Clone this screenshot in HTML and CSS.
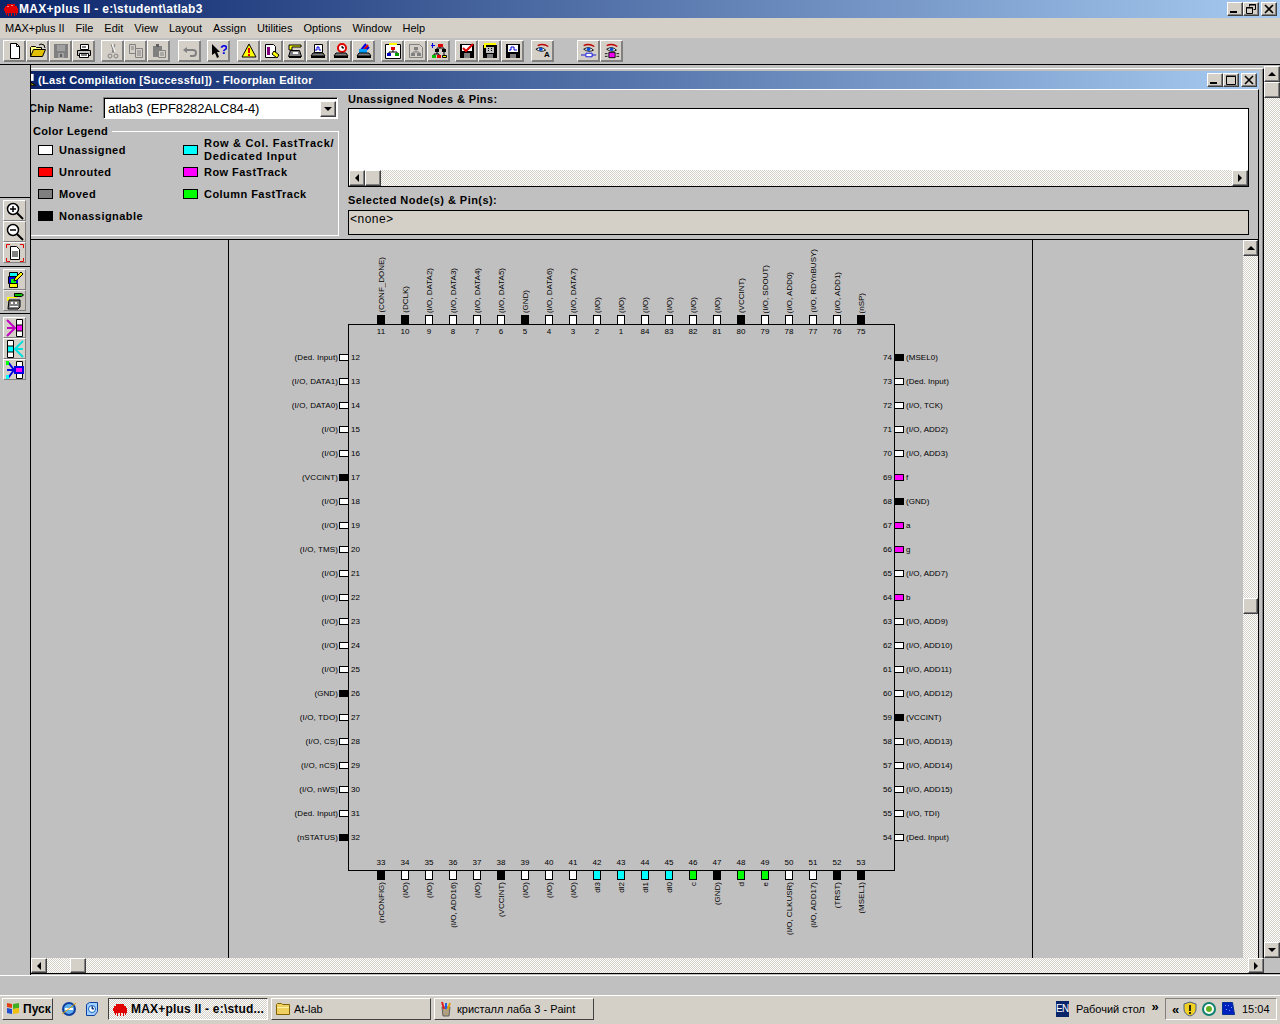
FILE: index.html
```html
<!DOCTYPE html>
<html lang="en">
<head>
<meta charset="utf-8">
<title>MAX+plus II</title>
<link rel="stylesheet" href="styles.css">
</head>
<body>
<div class="screen">
  <header class="titlebar">
    <svg class="ic16 app-logo" viewBox="0 0 16 16"><path fill="#e00000" d="M2 5h2V3h8v2h2v2h1v5h-1v2h-1v-2h-1v3h-1v-3H9v3H8v-3H6v3H5v-3H4v2H3v-2H2v-2H1V7h1z"/><path fill="#ff8080" d="M4 5h2v1H4zM8 4h2v1H8z"/></svg>
    <span class="title-text">MAX+plus II - e:\student\atlab3</span>
    <div class="win-btns main-btns">
      <button class="wb"><i class="g-min"></i></button><button class="wb"><svg viewBox="0 0 10 10"><path fill="none" stroke="#000" d="M3.5 2.5v-2h6v5h-2M.5 3.5h6v6h-6z"/><path stroke="#000" d="M3 1h7M0 4h7"/></svg></button><button class="wb wb-close"><svg viewBox="0 0 10 10"><path stroke="#000" stroke-width="1.6" d="M1 1l8 8M9 1l-8 8"/></svg></button>
    </div>
  </header>
  <nav class="menubar">
    <span>MAX+plus II</span><span>File</span><span>Edit</span><span>View</span><span>Layout</span><span>Assign</span><span>Utilities</span><span>Options</span><span>Window</span><span>Help</span>
  </nav>
  <div class="toolbar">
    <div class="tb-group g-file">
      <button class="tb"><svg class="ic16" viewBox="0 0 16 16"><path fill="#fff" stroke="#000" d="M3.5.5h6l3 3v12h-9z"/><path fill="none" stroke="#000" d="M9.5.5v3h3"/></svg></button>
      <button class="tb"><svg class="ic16" viewBox="0 0 16 16"><path fill="#ffff80" stroke="#000" d="M.5 13.5v-9l1-1h4l1 1h5v2"/><path fill="#e0c000" stroke="#000" d="M.5 13.5l3-7h12l-3 7z"/><path fill="none" stroke="#000" d="M9 2l2-1 3 1 1 3"/></svg></button>
      <button class="tb"><svg class="ic16" viewBox="0 0 16 16"><path fill="#808080" d="M1 1h14v14H1z"/><path fill="#a0a0a0" d="M4 2h8v6H4zM5 10h6v5H5z"/><path fill="#606060" d="M7 11h2v3H7z"/></svg></button>
      <button class="tb"><svg class="ic16" viewBox="0 0 16 16"><path fill="#fff" stroke="#000" d="M4.5 1.5h8v5h-8z"/><path fill="#c0c0c0" stroke="#000" d="M1.5 7.5h13v5h-13z"/><path fill="#fff" stroke="#000" d="M3.5 10.5h9v4h-9z"/><path stroke="#000" d="M6 4h4M5 12h6"/></svg></button>
    </div>
    <div class="tb-group g-edit">
      <button class="tb"><svg class="ic16" viewBox="0 0 16 16"><path fill="none" stroke="#808080" d="M6 1l3 9M10 1L7 10"/><circle cx="5" cy="13" r="2" fill="none" stroke="#808080"/><circle cx="11" cy="13" r="2" fill="none" stroke="#808080"/><path fill="none" stroke="#fff" d="M7 1l3 8"/></svg></button>
      <button class="tb"><svg class="ic16" viewBox="0 0 16 16"><path fill="#d4d0c8" stroke="#808080" d="M1.5 1.5h6v9h-6z"/><path fill="#d4d0c8" stroke="#808080" d="M7.5 5.5h7v9h-7z"/><path stroke="#808080" d="M9 8h4M9 10h4M9 12h4M3 4h3M3 6h3"/></svg></button>
      <button class="tb"><svg class="ic16" viewBox="0 0 16 16"><path fill="#808080" d="M2 3h9v11H2z"/><path fill="#606060" d="M5 1h3v3H5z"/><path fill="#d4d0c8" stroke="#808080" d="M7.5 7.5h7v7h-7z"/><path stroke="#808080" d="M9 10h4M9 12h4"/></svg></button>
    </div>
    <div class="tb-group g-undo">
      <button class="tb"><svg class="ic16" viewBox="0 0 16 16"><path fill="none" stroke="#808080" stroke-width="2" d="M4 7h7q3 0 3 3t-3 3H8"/><path fill="#808080" d="M1 7l4-3v6z"/></svg></button>
    </div>
    <div class="tb-group g-help">
      <button class="tb"><svg class="ic16" viewBox="0 0 16 16"><path fill="#000" d="M1 1l8 8H6l2 5-2 1-2-5-3 2z"/><text x="9" y="11" class="q-mark">?</text></svg></button>
    </div>
    <div class="tb-group g-comp">
      <button class="tb"><svg class="ic16" viewBox="0 0 16 16"><path fill="#ffff00" stroke="#000" d="M8 1l7 13H1z"/><path stroke="#e00000" stroke-width="2" d="M8 5v5M8 11v2"/></svg></button>
      <button class="tb"><svg class="ic16" viewBox="0 0 16 16"><path fill="#fff" stroke="#000" d="M1.5 1.5h8l2 2v11h-10z"/><path fill="#800080" d="M3 4h3v8H3z"/><path fill="#ffff00" stroke="#000" d="M10 8l5 4-2 3-5-4z"/></svg></button>
      <button class="tb"><svg class="ic16" viewBox="0 0 16 16"><path fill="#ffff00" stroke="#000" d="M2 2h12v2H5v3H2z"/><path fill="#808080" stroke="#000" d="M3.5 7.5h9l2 6h-13z"/><path fill="#fff" d="M6 9h5v2H6z"/><path fill="#000" d="M2 13h12v2H2z"/></svg></button>
      <button class="tb"><svg class="ic16" viewBox="0 0 16 16"><path fill="#fff" stroke="#000" d="M4.5 1.5h8v8h-8z"/><path fill="none" stroke="#0000e0" d="M5 7h2V4h2v3h2"/><path fill="#808080" stroke="#000" d="M3 10h10l2 3H1z"/><path fill="#000" d="M1 13h14v2H1z"/></svg></button>
      <button class="tb"><svg class="ic16" viewBox="0 0 16 16"><circle cx="9" cy="5" r="4" fill="#fff" stroke="#e00000" stroke-width="2"/><path stroke="#000" d="M9 3v2h2"/><path fill="#808080" stroke="#000" d="M3 10h10l2 3H1z"/><path fill="#000" d="M1 13h14v2H1z"/></svg></button>
      <button class="tb"><svg class="ic16" viewBox="0 0 16 16"><path stroke="#e00000" stroke-width="2" fill="none" d="M7 8l5-6"/><path stroke="#0000e0" stroke-width="2" fill="none" d="M5 7l5-6M9 8l4-4"/><path fill="#00a0ff" d="M3 6h8v5H3z"/><path fill="#808080" stroke="#000" d="M3 10h10l2 3H1z"/><path fill="#000" d="M1 13h14v2H1z"/></svg></button>
    </div>
    <div class="tb-group g-hier">
      <button class="tb"><svg class="ic16" viewBox="0 0 16 16"><path fill="#fff" stroke="#000" d="M.5 1.5h15v14H.5z"/><path fill="#ffff00" d="M4 0h8v2H4z"/><path fill="#e00000" d="M6 4h4v3H6z"/><path fill="#0000c0" d="M2 10h4v3H2z"/><path fill="#00a000" d="M10 10h4v3h-4z"/><path fill="none" stroke="#000" d="M8 7v2H4v1M8 9h4v1"/></svg></button>
      <button class="tb"><svg class="ic16" viewBox="0 0 16 16"><path fill="#d4d0c8" stroke="#808080" d="M1.5 1.5h10l3 3v10h-13z"/><path fill="#808080" d="M6 4h4v3H6zM3 10h4v3H3zM9 10h4v3H9z"/><path fill="none" stroke="#808080" d="M8 7v2H5v1M8 9h3v1"/></svg></button>
      <button class="tb"><svg class="ic16" viewBox="0 0 16 16"><path fill="#e00000" d="M7 1h5v3H7z"/><path fill="#0000e0" d="M0 2h1V0h1v2h2v1H2v2H1V3H0z"/><path fill="#000" d="M4 6h4v3H4zM11 6h4v3h-4z"/><path fill="#00c000" d="M1 12h4v3H1z"/><path fill="#e00000" d="M6 12h4v3H6z"/><path fill="#ffff00" stroke="#000" d="M11.500 12.500h4v2h-4z"/><path fill="none" stroke="#000" d="M9 4v1H6v1M9 5h4v1M6 9v2H3v1M6 11h2v1M13 9v3"/></svg></button>
    </div>
    <div class="tb-group g-disk">
      <button class="tb"><svg class="ic16" viewBox="0 0 16 16"><path fill="#000" d="M1 1h14v14H1z"/><path fill="#fff" d="M3 2h10v6H3z"/><path fill="#808080" d="M5 10h6v5H5z"/><path fill="none" stroke="#e00000" stroke-width="2" d="M4 5l3 3 7-7"/></svg></button>
      <button class="tb"><svg class="ic16" viewBox="0 0 16 16"><path fill="#000" d="M1 2h14v13H1z"/><path fill="#ffff00" d="M2 0h12v2H4v3H2z"/><path fill="#c0c0c0" d="M4 4h8v6H4z"/><path fill="#000" d="M6 5h1v1H6zM9 5h1v1H9zM6 7h1v1H6zM9 7h1v1H9z"/><path fill="#808080" d="M5 11h6v4H5z"/></svg></button>
      <button class="tb"><svg class="ic16" viewBox="0 0 16 16"><path fill="#000" d="M1 1h14v14H1z"/><path fill="#fff" d="M3 2h10v7H3z"/><path fill="none" stroke="#0000e0" d="M4 7h2V4h3v3h3"/><path fill="#808080" d="M5 11h6v4H5z"/></svg></button>
    </div>
    <div class="tb-group g-eye">
      <button class="tb"><svg class="ic16" viewBox="0 0 18 16"><path fill="none" stroke="#c00000" stroke-width="1.500" d="M3 2q6-3 12 1"/><path fill="#fff" stroke="#000" d="M1 6q6-4 11 1-5 3-11-1z"/><circle cx="6.500" cy="6" r="2" fill="#0050e0"/><text x="10" y="15" class="a-mark">A</text></svg></button>
    </div>
    <div class="tb-group g-eye2">
      <button class="tb"><svg class="ic16" viewBox="0 0 18 16"><path fill="none" stroke="#c00000" stroke-width="1.500" d="M3 2q6-3 12 1"/><path fill="#fff" stroke="#000" d="M3 6q6-4 11 1-5 3-11-1z"/><circle cx="8.500" cy="6" r="2" fill="#0050e0"/><path stroke="#0000e0" d="M0 12.500h5M12 12.500h5"/><path fill="#fff" stroke="#0000e0" d="M5.500 10.500h7v4h-7z"/></svg></button>
      <button class="tb"><svg class="ic16" viewBox="0 0 18 16"><path fill="none" stroke="#c00000" stroke-width="1.500" d="M3 2q6-3 12 1"/><path fill="#fff" stroke="#000" d="M3 6q6-4 11 1-5 3-11-1z"/><circle cx="8.500" cy="6" r="2" fill="#0050e0"/><path fill="#f000f0" stroke="#000" d="M5.500 9.500h7v6h-7z"/><path stroke="#000" d="M1 11h3M1 14h3M14 11h3M14 14h3"/></svg></button>
    </div>
  </div>

  <div class="workspace">
    <aside class="side-tools">
      <div class="st-group st-zoom">
        <button class="st"><svg class="ic18" viewBox="0 0 18 18"><circle cx="7" cy="7" r="5.500" fill="#fff" stroke="#000" stroke-width="1.500"/><path stroke="#000" stroke-width="1.500" d="M4 7h6M7 4v6"/><path stroke="#000" stroke-width="2" d="M11 11l6 6"/></svg></button>
        <button class="st"><svg class="ic18" viewBox="0 0 18 18"><circle cx="7" cy="7" r="5.500" fill="#fff" stroke="#000" stroke-width="1.500"/><path stroke="#000" stroke-width="1.500" d="M4 7h6"/><path stroke="#000" stroke-width="2" d="M11 11l6 6"/></svg></button>
        <button class="st"><svg class="ic18" viewBox="0 0 18 18"><path fill="#fff" stroke="#000" d="M4.500 2.500h6l3 3v10h-9z"/><path stroke="#000" d="M6 8h6M6 10h6M6 12h6"/><path fill="none" stroke="#e00000" d="M.5 4V.5H4M14 .5h3.500V4M.5 14v3.500H4M14 17.500h3.500V14"/></svg></button>
      </div>
      <div class="st-group st-edit">
        <button class="st"><svg class="ic18" viewBox="0 0 18 18"><path fill="#00ffff" stroke="#000" d="M3.500 1.500h8v7h-8z"/><path fill="#00ff00" stroke="#000" d="M2.500 5.500h9v7h-9z"/><path fill="none" stroke="#0000e0" stroke-width="2" d="M4 7h7v6H4z"/><path fill="#ffff00" stroke="#000" d="M3.500 12.500h8v4h-8z"/><path fill="#ffff00" stroke="#000" d="M9 7l6-6 2 2-6 6-3 1z"/></svg></button>
        <button class="st st-flat"><svg class="ic18" viewBox="0 0 18 18"><path fill="#00c000" stroke="#000" d="M8.500 1.500h7l2 1.500-2 1.500h-7z"/><path fill="#ffff00" d="M1 5h10v1H3v3H1z"/><path fill="#808080" stroke="#000" d="M3 8h11v7l-2 2H2z"/><path fill="#fff" d="M5 10h2v2H5zM9 10h2v2H9zM4 14h8v1H4z"/></svg></button>
      </div>
      <div class="st-group st-ft">
        <button class="st"><svg class="ic18" viewBox="0 0 18 18"><path fill="#fff" stroke="#000" d="M10.500.5h6v17h-6z"/><path fill="#ff00ff" d="M11 6h5v6h-5z"/><path stroke="#000" d="M10 6h7M10 12h7"/><path fill="none" stroke="#c000c0" stroke-width="2" d="M1 1l8 8-8 8M1 9h8"/></svg></button>
        <button class="st"><svg class="ic18" viewBox="0 0 18 18"><path fill="#fff" stroke="#000" d="M1.500.5h6v17h-6z"/><path fill="#00ffff" d="M2 6h5v6H2z"/><path stroke="#000" d="M1 6h7M1 12h7"/><path fill="none" stroke="#00e0e0" stroke-width="2" d="M17 1L9 9l8 8M17 9H9"/></svg></button>
        <button class="st"><svg class="ic18" viewBox="0 0 18 18"><path fill="#fff" stroke="#000" d="M10.500.5h6v17h-6z"/><path fill="#ff00ff" stroke="#0000e0" stroke-width="2" d="M9 6h8v6H9z"/><path fill="none" stroke="#0000e0" stroke-width="2" d="M2 1l6 8-6 8M1 9h7"/><path fill="#00ff00" d="M0 0h3v4H0z"/><path fill="#00ffff" d="M0 14h3v4H0z"/></svg></button>
      </div>
    </aside>

    <div class="work-col">
      <div class="work-main">
        <section class="child">
          <div class="child-title">
            <svg class="child-ic" viewBox="0 0 8 14"><path fill="#fff" d="M0 0h3v8H0z"/><path fill="#e0c000" stroke="#000" d="M0 10l5 3H0z"/></svg>
            <span class="title-text child-text">(Last Compilation [Successful]) - Floorplan Editor</span>
            <div class="win-btns">
              <button class="wb"><i class="g-min"></i></button><button class="wb"><svg viewBox="0 0 10 10"><path fill="none" stroke="#000" d="M.5 1.500h9v8h-9z"/><path stroke="#000" d="M0 1h10"/></svg></button><button class="wb wb-close"><svg viewBox="0 0 10 10"><path stroke="#000" stroke-width="1.600" d="M1 1l8 8M9 1l-8 8"/></svg></button>
            </div>
          </div>
          <div class="client">
            <div class="panel">
              <div class="panel-left">
                <div class="chip-row">
                  <span class="chip-label">Chip Name:</span>
                  <div class="combo"><span class="combo-text">atlab3 (EPF8282ALC84-4)</span><button class="sb-btn combo-btn"><i class="arr-d"></i></button></div>
                </div>
                <div class="legend">
                  <span class="legend-title">Color Legend</span>
                  <div class="legend-grid">
                    <div class="lg"><i class="sw c-white"></i><span>Unassigned</span></div>
                    <div class="lg lg-wide"><i class="sw c-cyan"></i><span>Row &amp; Col. FastTrack/<br>Dedicated Input</span></div>
                    <div class="lg"><i class="sw c-red"></i><span>Unrouted</span></div>
                    <div class="lg"><i class="sw c-mag"></i><span>Row FastTrack</span></div>
                    <div class="lg"><i class="sw c-gray"></i><span>Moved</span></div>
                    <div class="lg"><i class="sw c-green"></i><span>Column FastTrack</span></div>
                    <div class="lg"><i class="sw c-black"></i><span>Nonassignable</span></div>
                  </div>
                </div>
              </div>
              <div class="panel-right">
                <div class="head-a">Unassigned Nodes &amp; Pins:</div>
                <div class="listbox">
                  <div class="list-body"></div>
                  <div class="hbar list-bar"><button class="sb-btn"><i class="arr-l"></i></button><button class="sb-btn"></button><div class="track"></div><button class="sb-btn"><i class="arr-r"></i></button></div>
                </div>
                <div class="head-b">Selected Node(s) &amp; Pin(s):</div>
                <div class="selbox">&lt;none&gt;</div>
              </div>
            </div>
            <div class="canvas">
              <div class="canvas-view">
                <div class="sheet">
                  <div class="chip">
                    <div class="side-top">
                      <div class="pv"><span class="vl">(CONF_DONE)</span><i class="bv c-black"></i><b>11</b></div>
                      <div class="pv"><span class="vl">(DCLK)</span><i class="bv c-black"></i><b>10</b></div>
                      <div class="pv"><span class="vl">(I/O, DATA2)</span><i class="bv c-white"></i><b>9</b></div>
                      <div class="pv"><span class="vl">(I/O, DATA3)</span><i class="bv c-white"></i><b>8</b></div>
                      <div class="pv"><span class="vl">(I/O, DATA4)</span><i class="bv c-white"></i><b>7</b></div>
                      <div class="pv"><span class="vl">(I/O, DATA5)</span><i class="bv c-white"></i><b>6</b></div>
                      <div class="pv"><span class="vl">(GND)</span><i class="bv c-black"></i><b>5</b></div>
                      <div class="pv"><span class="vl">(I/O, DATA6)</span><i class="bv c-white"></i><b>4</b></div>
                      <div class="pv"><span class="vl">(I/O, DATA7)</span><i class="bv c-white"></i><b>3</b></div>
                      <div class="pv"><span class="vl">(I/O)</span><i class="bv c-white"></i><b>2</b></div>
                      <div class="pv"><span class="vl">(I/O)</span><i class="bv c-white"></i><b>1</b></div>
                      <div class="pv"><span class="vl">(I/O)</span><i class="bv c-white"></i><b>84</b></div>
                      <div class="pv"><span class="vl">(I/O)</span><i class="bv c-white"></i><b>83</b></div>
                      <div class="pv"><span class="vl">(I/O)</span><i class="bv c-white"></i><b>82</b></div>
                      <div class="pv"><span class="vl">(I/O)</span><i class="bv c-white"></i><b>81</b></div>
                      <div class="pv"><span class="vl">(VCCINT)</span><i class="bv c-black"></i><b>80</b></div>
                      <div class="pv"><span class="vl">(I/O, SDOUT)</span><i class="bv c-white"></i><b>79</b></div>
                      <div class="pv"><span class="vl">(I/O, ADD0)</span><i class="bv c-white"></i><b>78</b></div>
                      <div class="pv"><span class="vl">(I/O, RDYnBUSY)</span><i class="bv c-white"></i><b>77</b></div>
                      <div class="pv"><span class="vl">(I/O, ADD1)</span><i class="bv c-white"></i><b>76</b></div>
                      <div class="pv"><span class="vl">(nSP)</span><i class="bv c-black"></i><b>75</b></div>
                    </div>
                    <div class="side-left">
                      <div class="ph"><span>(Ded. Input)</span><i class="bh c-white"></i><b>12</b></div>
                      <div class="ph"><span>(I/O, DATA1)</span><i class="bh c-white"></i><b>13</b></div>
                      <div class="ph"><span>(I/O, DATA0)</span><i class="bh c-white"></i><b>14</b></div>
                      <div class="ph"><span>(I/O)</span><i class="bh c-white"></i><b>15</b></div>
                      <div class="ph"><span>(I/O)</span><i class="bh c-white"></i><b>16</b></div>
                      <div class="ph"><span>(VCCINT)</span><i class="bh c-black"></i><b>17</b></div>
                      <div class="ph"><span>(I/O)</span><i class="bh c-white"></i><b>18</b></div>
                      <div class="ph"><span>(I/O)</span><i class="bh c-white"></i><b>19</b></div>
                      <div class="ph"><span>(I/O, TMS)</span><i class="bh c-white"></i><b>20</b></div>
                      <div class="ph"><span>(I/O)</span><i class="bh c-white"></i><b>21</b></div>
                      <div class="ph"><span>(I/O)</span><i class="bh c-white"></i><b>22</b></div>
                      <div class="ph"><span>(I/O)</span><i class="bh c-white"></i><b>23</b></div>
                      <div class="ph"><span>(I/O)</span><i class="bh c-white"></i><b>24</b></div>
                      <div class="ph"><span>(I/O)</span><i class="bh c-white"></i><b>25</b></div>
                      <div class="ph"><span>(GND)</span><i class="bh c-black"></i><b>26</b></div>
                      <div class="ph"><span>(I/O, TDO)</span><i class="bh c-white"></i><b>27</b></div>
                      <div class="ph"><span>(I/O, CS)</span><i class="bh c-white"></i><b>28</b></div>
                      <div class="ph"><span>(I/O, nCS)</span><i class="bh c-white"></i><b>29</b></div>
                      <div class="ph"><span>(I/O, nWS)</span><i class="bh c-white"></i><b>30</b></div>
                      <div class="ph"><span>(Ded. Input)</span><i class="bh c-white"></i><b>31</b></div>
                      <div class="ph"><span>(nSTATUS)</span><i class="bh c-black"></i><b>32</b></div>
                    </div>
                    <div class="side-right">
                      <div class="ph"><b>74</b><i class="bh c-black"></i><span>(MSEL0)</span></div>
                      <div class="ph"><b>73</b><i class="bh c-white"></i><span>(Ded. Input)</span></div>
                      <div class="ph"><b>72</b><i class="bh c-white"></i><span>(I/O, TCK)</span></div>
                      <div class="ph"><b>71</b><i class="bh c-white"></i><span>(I/O, ADD2)</span></div>
                      <div class="ph"><b>70</b><i class="bh c-white"></i><span>(I/O, ADD3)</span></div>
                      <div class="ph"><b>69</b><i class="bh c-mag"></i><span>f</span></div>
                      <div class="ph"><b>68</b><i class="bh c-black"></i><span>(GND)</span></div>
                      <div class="ph"><b>67</b><i class="bh c-mag"></i><span>a</span></div>
                      <div class="ph"><b>66</b><i class="bh c-mag"></i><span>g</span></div>
                      <div class="ph"><b>65</b><i class="bh c-white"></i><span>(I/O, ADD7)</span></div>
                      <div class="ph"><b>64</b><i class="bh c-mag"></i><span>b</span></div>
                      <div class="ph"><b>63</b><i class="bh c-white"></i><span>(I/O, ADD9)</span></div>
                      <div class="ph"><b>62</b><i class="bh c-white"></i><span>(I/O, ADD10)</span></div>
                      <div class="ph"><b>61</b><i class="bh c-white"></i><span>(I/O, ADD11)</span></div>
                      <div class="ph"><b>60</b><i class="bh c-white"></i><span>(I/O, ADD12)</span></div>
                      <div class="ph"><b>59</b><i class="bh c-black"></i><span>(VCCINT)</span></div>
                      <div class="ph"><b>58</b><i class="bh c-white"></i><span>(I/O, ADD13)</span></div>
                      <div class="ph"><b>57</b><i class="bh c-white"></i><span>(I/O, ADD14)</span></div>
                      <div class="ph"><b>56</b><i class="bh c-white"></i><span>(I/O, ADD15)</span></div>
                      <div class="ph"><b>55</b><i class="bh c-white"></i><span>(I/O, TDI)</span></div>
                      <div class="ph"><b>54</b><i class="bh c-white"></i><span>(Ded. Input)</span></div>
                    </div>
                    <div class="side-bottom">
                      <div class="pv"><b>33</b><i class="bv c-black"></i><span class="vl">(nCONFIG)</span></div>
                      <div class="pv"><b>34</b><i class="bv c-white"></i><span class="vl">(I/O)</span></div>
                      <div class="pv"><b>35</b><i class="bv c-white"></i><span class="vl">(I/O)</span></div>
                      <div class="pv"><b>36</b><i class="bv c-white"></i><span class="vl">(I/O, ADD16)</span></div>
                      <div class="pv"><b>37</b><i class="bv c-white"></i><span class="vl">(I/O)</span></div>
                      <div class="pv"><b>38</b><i class="bv c-black"></i><span class="vl">(VCCINT)</span></div>
                      <div class="pv"><b>39</b><i class="bv c-white"></i><span class="vl">(I/O)</span></div>
                      <div class="pv"><b>40</b><i class="bv c-white"></i><span class="vl">(I/O)</span></div>
                      <div class="pv"><b>41</b><i class="bv c-white"></i><span class="vl">(I/O)</span></div>
                      <div class="pv"><b>42</b><i class="bv c-cyan"></i><span class="vl">dl3</span></div>
                      <div class="pv"><b>43</b><i class="bv c-cyan"></i><span class="vl">dl2</span></div>
                      <div class="pv"><b>44</b><i class="bv c-cyan"></i><span class="vl">dl1</span></div>
                      <div class="pv"><b>45</b><i class="bv c-cyan"></i><span class="vl">dl0</span></div>
                      <div class="pv"><b>46</b><i class="bv c-green"></i><span class="vl">c</span></div>
                      <div class="pv"><b>47</b><i class="bv c-black"></i><span class="vl">(GND)</span></div>
                      <div class="pv"><b>48</b><i class="bv c-green"></i><span class="vl">d</span></div>
                      <div class="pv"><b>49</b><i class="bv c-green"></i><span class="vl">e</span></div>
                      <div class="pv"><b>50</b><i class="bv c-white"></i><span class="vl">(I/O, CLKUSR)</span></div>
                      <div class="pv"><b>51</b><i class="bv c-white"></i><span class="vl">(I/O, ADD17)</span></div>
                      <div class="pv"><b>52</b><i class="bv c-black"></i><span class="vl">(TRST)</span></div>
                      <div class="pv"><b>53</b><i class="bv c-black"></i><span class="vl">(MSEL1)</span></div>
                    </div>
                  </div>
                </div>
              </div>
              <div class="vbar canvas-bar"><button class="sb-btn"><i class="arr-u"></i></button><div class="track t-a"></div><button class="sb-btn"></button><div class="track"></div></div>
            </div>
          </div>
        </section>
        <div class="vbar outer-bar"><button class="sb-btn"><i class="arr-u"></i></button><button class="sb-btn"></button><div class="track"></div><button class="sb-btn"><i class="arr-d"></i></button></div>
      </div>
      <div class="bottom-row">
        <div class="hbar work-bar"><button class="sb-btn"><i class="arr-l"></i></button><div class="track t-b"></div><button class="sb-btn"></button><div class="track"></div><button class="sb-btn"><i class="arr-r"></i></button></div>
      </div>
    </div>
  </div>

  <div class="statusbar"></div>

  <footer class="taskbar">
    <button class="start"><svg class="ic16" viewBox="0 0 16 16"><path fill="#e04010" d="M2 2l5 1v4L2 6z"/><path fill="#40b020" d="M8 3l6-1v5l-6 1z"/><path fill="#2050d0" d="M2 7l5 1v5l-5-1z"/><path fill="#f0c010" d="M8 8l6-1v5l-6 1z"/></svg><span>Пуск</span></button>
    <div class="quick">
      <svg class="ic16" viewBox="0 0 16 16"><circle cx="8" cy="8" r="6" fill="#60b0f0" stroke="#1040a0" stroke-width="2"/><path stroke="#fff" stroke-width="2" d="M4 8h8"/><path fill="none" stroke="#e0a000" d="M1 13Q8 8 15 2"/></svg>
      <svg class="ic16" viewBox="0 0 16 16"><path fill="#a0d0ff" stroke="#1040a0" d="M2.500 3.500l3-2h8v9l-3 4h-8z"/><circle cx="8" cy="8" r="3.500" fill="#fff" stroke="#1060c0"/><path stroke="#1040a0" d="M8 5v3h2"/></svg>
    </div>
    <div class="task task-on"><svg class="ic16" viewBox="0 0 16 16"><path fill="#e00000" d="M2 5h2V3h8v2h2v2h1v5h-1v2h-1v-2h-1v3h-1v-3H9v3H8v-3H6v3H5v-3H4v2H3v-2H2v-2H1V7h1z"/></svg><span>MAX+plus II - e:\stud...</span></div>
    <div class="task"><svg class="ic16" viewBox="0 0 16 16"><path fill="#f0d060" stroke="#806000" d="M1.500 13.500v-10l1-1h4l1 1h7v10z"/><path fill="#fff0a0" d="M2 6h12v1H2z"/></svg><span>At-lab</span></div>
    <div class="task"><svg class="ic16" viewBox="0 0 16 16"><path fill="#b0a080" stroke="#606060" d="M4 6h8l-1 9H5z"/><path stroke="#e02020" stroke-width="2" d="M6 8L4 1"/><path stroke="#2060e0" stroke-width="2" d="M8 8V2"/><path stroke="#e0a000" stroke-width="2" d="M10 8l2-6"/></svg><span>кристалл лаба 3 - Paint</span></div>
    <div class="tray-left">
      <span class="lang">EN</span>
      <span class="desk">Рабочий стол</span>
      <span class="chev">»</span>
    </div>
    <div class="tray">
      <span class="chev2">«</span>
      <svg class="ic16" viewBox="0 0 16 16"><path fill="#f0d020" stroke="#506080" d="M8 1l6 2v5q0 5-6 7-6-2-6-7V3z"/><path stroke="#000" stroke-width="1.600" d="M8 4v6M8 11v2"/></svg>
      <svg class="ic16" viewBox="0 0 16 16"><circle cx="8" cy="8" r="7" fill="#108070"/><circle cx="8" cy="8" r="5" fill="#fff"/><circle cx="8" cy="8" r="3" fill="#60b020"/></svg>
      <svg class="ic16" viewBox="0 0 16 16"><path fill="#0020c0" stroke="#003090" d="M2.500 1.500h10l2 12h-12z"/><path fill="#80a0ff" d="M5 4h1v1H5zM8 4h1v1H8zM11 6h1v1h-1zM6 8h1v1H6zM9 9h1v1H9z"/></svg>
      <span class="clock">15:04</span>
    </div>
  </footer>
</div>
</body>
</html>
```

FILE: styles.css
```css
* { box-sizing: border-box; }
html, body { margin: 0; padding: 0; }
body { font-family: "Liberation Sans", Arial, sans-serif; font-size: 11px; color: #000; background: #d4d0c8; }
button { padding: 0; margin: 0; font: inherit; color: inherit; display: block; }
i { display: block; }
b { font-weight: normal; }
.screen { width: 1280px; height: 1024px; overflow: hidden; display: flex; flex-direction: column; }

.ic16 { width: 16px; height: 16px; display: block; flex: none; }
.ic18 { width: 18px; height: 18px; display: block; }

/* title bars */
.titlebar { height: 18px; flex: none; display: flex; align-items: center; padding: 0 3px 0 3px; background: linear-gradient(90deg, #0a246a, #a6caf0); }
.title-text { color: #fff; font-weight: bold; font-size: 12px; letter-spacing: .3px; white-space: nowrap; }
.child-text { font-size: 11px; }
.win-btns { margin-left: auto; display: flex; }
.wb { width: 16px; height: 14px; background: #d4d0c8; border: 1px solid; border-color: #fff #404040 #404040 #fff; box-shadow: inset -1px -1px 0 #808080; display: flex; align-items: center; justify-content: center; }
.wb svg { width: 10px; height: 10px; display: block; }
.wb-close { margin-left: 2px; }
.g-min { width: 7px; height: 2px; background: #000; margin: 6px 3px 0 0; }

/* menu */
.menubar { height: 20px; flex: none; display: flex; align-items: center; gap: 11px; padding-left: 5px; background: #d4d0c8; white-space: nowrap; }

/* toolbar */
.toolbar { height: 27px; flex: none; display: flex; align-items: flex-start; padding: 2px 0 0 3px; background: #c0c0c0; border-bottom: 1px solid #000; }
.tb-group { display: flex; }
.tb { width: 23px; height: 22px; background: #d4d0c8; border: 1px solid; border-color: #fff #808080 #808080 #fff; box-shadow: inset -1px -1px 0 #808080; display: flex; align-items: center; justify-content: center; }
.g-edit { margin-left: 6px; }
.g-undo { margin-left: 8px; }
.g-help { margin-left: 6px; }
.g-comp { margin-left: 7px; }
.g-hier { margin-left: 6px; }
.g-disk { margin-left: 5px; }
.g-eye { margin-left: 7px; }
.g-eye2 { margin-left: 23px; }
.q-mark { font: bold 13px "Liberation Sans", sans-serif; fill: #0000e0; }
.a-mark { font: bold 9px "Liberation Sans", sans-serif; fill: #000; }

/* workspace */
.workspace { height: 910px; flex: none; display: flex; background: #c0c0c0; }
.side-tools { width: 31px; flex: none; border-right: 1px solid #000; padding-top: 132px; background: #c0c0c0; }
.st-group { border-top: 1px solid #000; padding: 2px 0 3px 3px; }
.st-edit { padding-bottom: 2px; }
.st-ft { padding-top: 3px; }
.st { width: 23px; height: 21px; background: #d4d0c8; border: 1px solid; border-color: #fff #808080 #808080 #fff; display: flex; align-items: center; justify-content: center; }
.st-flat { background: #c8c4bc; border-color: #e8e8e8 #808080 #808080 #e8e8e8; }

.work-col { flex: 1; min-width: 0; display: flex; flex-direction: column; }
.work-main { height: 893px; flex: none; display: flex; }
.bottom-row { height: 16px; flex: none; border-bottom: 1px solid #000; padding-right: 16px; }

/* child window */
.child { width: 1233px; flex: none; display: flex; flex-direction: column; margin-top: 3px; border-top: 1px solid #fff; border-right: 1px solid #000; box-shadow: inset -1px 0 0 #808080; padding: 2px 4px 0 0; overflow: hidden; }
.child-title { height: 18px; flex: none; display: flex; align-items: center; background: linear-gradient(90deg, #0a246a, #a6caf0); padding-right: 2px; }
.child-ic { width: 7px; height: 14px; flex: none; }
.client { flex: 1; min-height: 0; border-top: 1px solid #fff; border-right: 1px solid #000; display: flex; flex-direction: column; }

.panel { height: 150px; flex: none; display: flex; border-bottom: 1px solid #000; background: #c0c0c0; }
.panel-left { width: 317px; flex: none; }
.chip-row { display: flex; align-items: center; height: 22px; margin-top: 7px; }
.chip-label { width: 70px; flex: none; margin-left: -2px; margin-right: 4px; font-weight: bold; font-size: 11px; letter-spacing: .3px; white-space: nowrap; }
.combo { width: 235px; height: 22px; flex: none; background: #fff; border: 1px solid; border-color: #808080 #fff #fff #808080; box-shadow: inset 1px 1px 0 #000; display: flex; align-items: center; justify-content: space-between; padding: 1px 1px 0 4px; }
.combo-text { font-size: 13px; letter-spacing: -.08px; white-space: nowrap; }
.combo-btn { width: 16px; height: 19px; }

.legend { width: 308px; height: 105px; margin-top: 12px; border: 1px solid #fff; border-left: 0; }
.legend-title { display: block; width: fit-content; margin: -8px 0 0 0; padding: 0 4px 0 2px; height: 15px; line-height: 15px; font-weight: bold; font-size: 11px; letter-spacing: .35px; background: #c0c0c0; }
.legend-grid { display: grid; grid-template-columns: 145px 1fr; grid-auto-rows: 22px; padding-left: 7px; }
.lg { display: flex; align-items: center; gap: 6px; font-weight: bold; font-size: 11px; letter-spacing: .45px; line-height: 13px; white-space: nowrap; }
.lg-wide { letter-spacing: .7px; }
.sw { width: 15px; height: 10px; border: 1px solid #000; flex: none; }

.panel-right { width: 901px; flex: none; }
.head-a { height: 18px; line-height: 18px; font-weight: bold; font-size: 11px; letter-spacing: .4px; }
.listbox { height: 79px; border: 1px solid #000; display: flex; flex-direction: column; background: #fff; }
.list-body { flex: 1; }
.head-b { height: 23px; padding-top: 5px; line-height: 16px; font-weight: bold; font-size: 11px; letter-spacing: .45px; }
.selbox { height: 25px; border: 1px solid #000; background: #d4d0c8; padding-left: 1px; line-height: 19px; font-family: "Liberation Mono", monospace; font-size: 12px; }

/* scroll bars */
.sb-btn { width: 16px; height: 16px; flex: none; background: #d4d0c8; border: 1px solid; border-color: #fff #404040 #404040 #fff; box-shadow: inset -1px -1px 0 #808080; display: flex; align-items: center; justify-content: center; }
.track { flex: 1; min-width: 0; min-height: 0; background-color: #fff; background-image: conic-gradient(#d4d0c8 25%, #fff 0 50%, #d4d0c8 0 75%, #fff 0); background-size: 2px 2px; }
.hbar { display: flex; height: 16px; flex: none; }
.vbar { display: flex; flex-direction: column; width: 16px; flex: none; }
.arr-u, .arr-d, .arr-l, .arr-r { width: 0; height: 0; border-style: solid; border-color: transparent; }
.arr-u { border-width: 0 4px 4px; border-bottom-color: #000; }
.arr-d { border-width: 4px 4px 0; border-top-color: #000; }
.arr-l { border-width: 4px 4px 4px 0; border-right-color: #000; }
.arr-r { border-width: 4px 0 4px 4px; border-left-color: #000; }
.t-a { flex: none; height: 342px; }
.t-b { flex: none; width: 23px; }
.outer-bar { height: 892px; margin-top: 1px; }
.canvas-bar { height: 718px; width: 15px; }
.canvas-bar .sb-btn { width: 15px; }
.work-bar { height: 15px; }
.work-bar .sb-btn { height: 15px; }

/* floorplan canvas */
.canvas { flex: 1; min-height: 0; display: flex; background: #c0c0c0; }
.canvas-view { flex: 1; min-width: 0; overflow: hidden; padding-left: 197px; }
.sheet { width: 805px; height: 718px; border: solid #000; border-width: 0 1px; padding: 84px 0 0 119px; }
.chip { position: relative; width: 547px; height: 547px; border: 1px solid #000; font-size: 8px; line-height: 11px; white-space: nowrap; }
.side-top, .side-bottom { position: absolute; left: 20px; display: flex; }
.side-top { bottom: calc(100% - 11px); align-items: flex-end; }
.side-bottom { top: calc(100% - 11px); align-items: flex-start; }
.side-left, .side-right { position: absolute; top: 20px; display: flex; flex-direction: column; }
.side-left { right: calc(100% - 12px); align-items: flex-end; }
.side-right { left: calc(100% - 12px); align-items: flex-start; }
.pv { width: 24px; display: flex; flex-direction: column; align-items: center; }
.pv b { height: 11px; }
.side-top .pv b { line-height: 13px; }
.side-bottom .pv b { line-height: 7px; }
.ph { height: 24px; display: flex; align-items: center; }
.ph b { width: 12px; padding-left: 2px; }
.side-right .ph b { padding: 0 2px 0 0; text-align: right; }
.ph span { padding: 0 1px; letter-spacing: .1px; }
.side-right .ph span { padding: 0 0 0 2px; letter-spacing: .05px; }
.vl { writing-mode: vertical-rl; transform: rotate(180deg); padding: 2px 0; }
.bv { width: 8px; height: 10px; border: 1px solid #000; }
.bh { width: 10px; height: 7px; border: 1px solid #000; }
.c-white { background: #fff; }
.c-black { background: #000; }
.c-red { background: #ff0000; }
.c-gray { background: #808080; }
.c-cyan { background: #00ffff; }
.c-mag { background: #ff00ff; }
.c-green { background: #00ff00; }

/* status + taskbar */
.statusbar { height: 20px; flex: none; background: #c0c0c0; border-top: 1px solid #fff; }
.taskbar { height: 29px; flex: none; background: #d4d0c8; border-top: 1px solid #fff; display: flex; align-items: flex-start; padding: 2px 3px 0 2px; }
.start { width: 51px; height: 22px; flex: none; display: flex; align-items: center; gap: 2px; padding-left: 2px; background: #d4d0c8; border: 1px solid; border-color: #fff #404040 #404040 #fff; font-weight: bold; font-size: 12px; }
.quick { width: 55px; flex: none; display: flex; gap: 7px; padding: 3px 0 0 8px; }
.task { width: 160px; height: 22px; flex: none; margin-right: 3px; display: flex; align-items: center; gap: 3px; padding-left: 3px; font-size: 11px; border: 1px solid; border-color: #fff #404040 #404040 #fff; background: #d4d0c8; white-space: nowrap; overflow: hidden; }
.task-on { border-color: #404040 #fff #fff #404040; background-color: #fff; background-image: conic-gradient(#d4d0c8 25%, #fff 0 50%, #d4d0c8 0 75%, #fff 0); background-size: 2px 2px; font-weight: bold; font-size: 12px; letter-spacing: .2px; }
.tray-left { margin-left: auto; display: flex; align-items: center; height: 22px; }
.lang { width: 13px; height: 16px; background: #0a246a; color: #fff; line-height: 16px; font-size: 10px; letter-spacing: -.5px; }
.desk { margin-left: 7px; font-size: 11px; }
.chev { width: 20px; text-align: center; font-size: 13px; font-weight: bold; margin-top: -6px; }
.tray { width: 112px; height: 22px; flex: none; display: flex; align-items: center; gap: 3px; padding-left: 6px; border: 1px solid; border-color: #808080 #fff #fff #808080; }
.chev2 { width: 7px; font-size: 13px; font-weight: bold; }
.clock { margin-left: 3px; font-size: 11px; }
```
